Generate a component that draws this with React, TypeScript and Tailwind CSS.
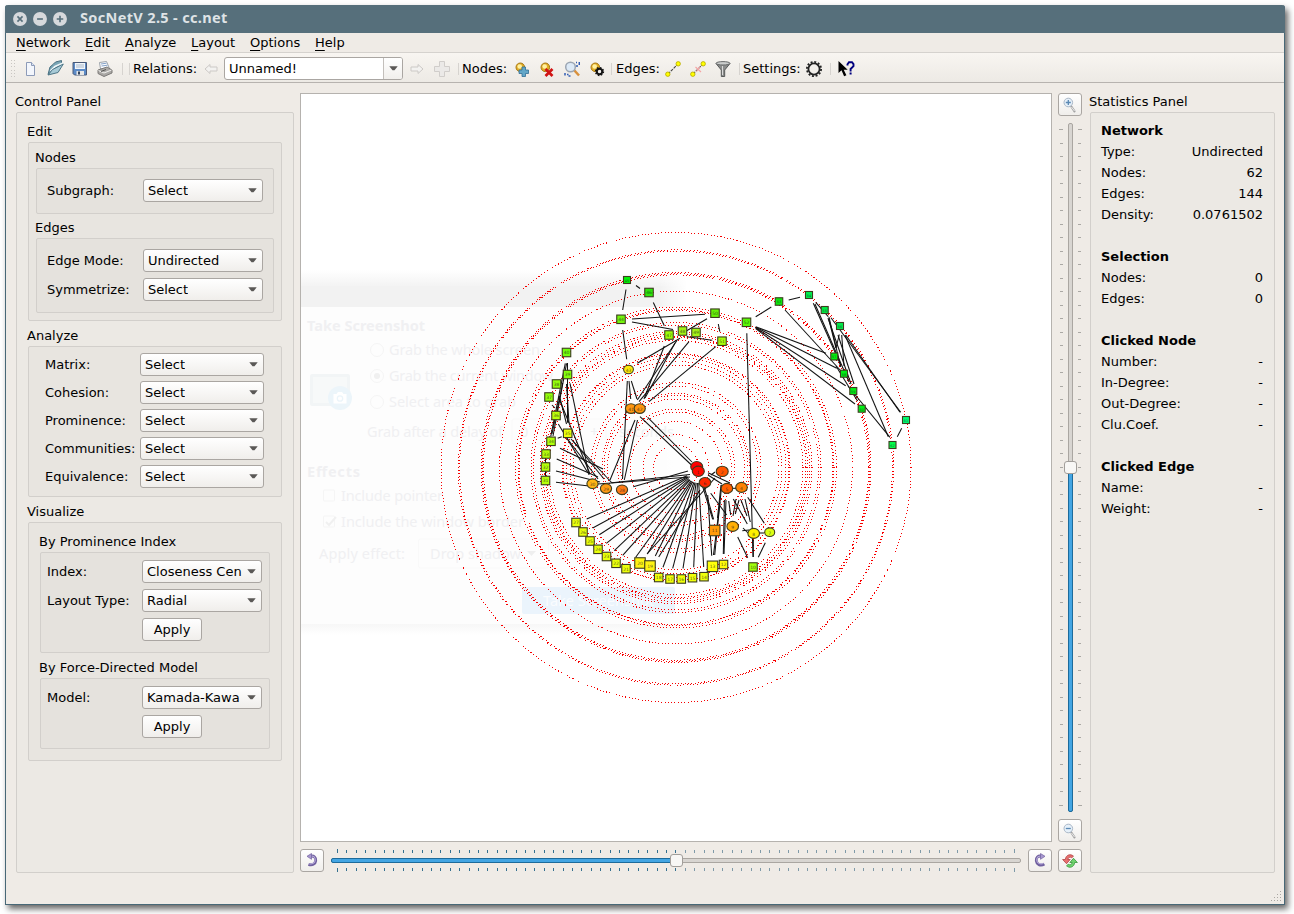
import React from "react";

function Caret() {
  return (
    <svg className="h-[5px] w-[9px] shrink-0" viewBox="0 0 9 5">
      <path d="M0.3 0.3h8.4L5.5 4.3h-2z" fill="#5a5856" />
    </svg>
  );
}

function Select({ value, width }: { value: string; width: string }) {
  return (
    <div
      className={`${width} flex h-[23px] shrink-0 items-center justify-between rounded-[3px] border border-[#aaa6a2] bg-linear-to-b from-white to-[#f0eeeb] pr-[5px] pl-[4px]`}
    >
      <span className="overflow-hidden whitespace-nowrap">{value}</span>
      <Caret />
    </div>
  );
}

function ApplyButton() {
  return (
    <button className="flex h-[23px] w-[60px] items-center justify-center rounded-[3px] border border-[#aaa6a2] bg-linear-to-b from-white to-[#f0eeeb]">
      Apply
    </button>
  );
}

function Group({ title, box, children }: { title: string; box: string; children?: React.ReactNode }) {
  return (
    <section>
      <h2 className="-ml-px h-[17px] pt-px leading-4 whitespace-nowrap">{title}</h2>
      <div className={`mt-[2px] rounded-[2px] border border-[#d2cfcb] ${box}`}>{children}</div>
    </section>
  );
}

function Field({ label, left, children }: { label: string; left: string; children: React.ReactNode }) {
  return (
    <div className="flex h-[23px] items-center">
      <span className={`${left} shrink-0 whitespace-nowrap`}>{label}</span>
      {children}
    </div>
  );
}

function ControlPanel() {
  return (
    <Group title="Control Panel" box="h-[761px] w-[278px] bg-[#ece9e4] pl-[11px] pt-[10px]">
      <Group title="Edit" box="h-[179px] w-[254px] bg-[#e8e5e0] pl-[7px] pt-[6px]">
        <Group title="Nodes" box="h-[46px] w-[238px] bg-[#e5e2dd] pl-[10px] pt-[10px]">
          <Field label="Subgraph:" left="w-[96px]">
            <Select value="Select" width="w-[120px]" />
          </Field>
        </Group>
        <div className="h-[5px]" />
        <Group title="Edges" box="flex h-[75px] w-[238px] flex-col gap-[6px] bg-[#e5e2dd] pl-[10px] pt-[10px]">
          <Field label="Edge Mode:" left="w-[96px]">
            <Select value="Undirected" width="w-[120px]" />
          </Field>
          <Field label="Symmetrize:" left="w-[96px]">
            <Select value="Select" width="w-[120px]" />
          </Field>
        </Group>
      </Group>
      <div className="h-[6px]" />
      <Group title="Analyze" box="flex h-[151px] w-[254px] flex-col gap-[5px] bg-[#e8e5e0] pl-[16px] pt-[6px]">
        {["Matrix:", "Cohesion:", "Prominence:", "Communities:", "Equivalence:"].map((l) => (
          <Field key={l} label={l} left="w-[95px]">
            <Select value="Select" width="w-[124px]" />
          </Field>
        ))}
      </Group>
      <div className="h-[6px]" />
      <Group title="Visualize" box="h-[239px] w-[254px] bg-[#e8e5e0] pl-[11px] pt-[10px]">
        <Group title="By Prominence Index" box="flex h-[101px] w-[230px] flex-col gap-[6px] bg-[#e5e2dd] pl-[6px] pt-[7px]">
          <Field label="Index:" left="w-[95px]">
            <Select value="Closeness Cen" width="w-[120px]" />
          </Field>
          <Field label="Layout Type:" left="w-[95px]">
            <Select value="Radial" width="w-[120px]" />
          </Field>
          <div className="pl-[95px]">
            <ApplyButton />
          </div>
        </Group>
        <div className="h-[6px]" />
        <Group title="By Force-Directed Model" box="flex h-[71px] w-[230px] flex-col gap-[6px] bg-[#e5e2dd] pl-[6px] pt-[7px]">
          <Field label="Model:" left="w-[95px]">
            <Select value="Kamada-Kawa" width="w-[120px]" />
          </Field>
          <div className="pl-[95px]">
            <ApplyButton />
          </div>
        </Group>
      </Group>
    </Group>
  );
}

type Stat = [string, string];
const STATS: { title: string; rows: Stat[] }[] = [
  { title: "Network", rows: [["Type:", "Undirected"], ["Nodes:", "62"], ["Edges:", "144"], ["Density:", "0.0761502"]] },
  { title: "Selection", rows: [["Nodes:", "0"], ["Edges:", "0"]] },
  { title: "Clicked Node", rows: [["Number:", "-"], ["In-Degree:", "-"], ["Out-Degree:", "-"], ["Clu.Coef.", "-"]] },
  { title: "Clicked Edge", rows: [["Name:", "-"], ["Weight:", "-"]] },
];

function StatisticsPanel() {
  return (
    <Group title="Statistics Panel" box="flex h-[761px] w-[185px] flex-col gap-[21px] bg-[#ece9e4] pt-[7px] pr-[11px] pl-[10px]">
      {STATS.map((s) => (
        <div key={s.title}>
          <div className="h-[21px] leading-[21px] font-bold">{s.title}</div>
          {s.rows.map(([k, v]) => (
            <div key={k} className="flex h-[21px] justify-between leading-[21px]">
              <span>{k}</span>
              <span>{v}</span>
            </div>
          ))}
        </div>
      ))}
    </Group>
  );
}

const CX = 676;
const CY = 467.5;
const RINGS = [
  235, 217.6, 216.4, 195, 193.8, 192.6, 176.5, 160.5, 158, 157, 145, 142.5, 136, 133.8, 131.5, 130, 127, 114, 113, 110,
  106, 102.5, 85, 81.5, 74, 72, 68.5, 58.5, 55.5, 46, 33, 22.5,
];

type Seg = [number, number, number, number];
const EDGES: Seg[] = [
  [636, 285.5, 640, 288.5], [626, 289.5, 622.7, 310], [653.3, 302.5, 664.3, 325.7], [632, 319, 705, 314.3],
  [632, 322, 673, 329.5], [622.7, 330, 626.7, 359.3], [637.3, 363.3, 680, 338.3], [686.7, 330.7, 707, 318.7],
  [686.7, 336.7, 712.3, 340.3], [718.3, 324, 719.8, 331.7], [715.7, 346.7, 649, 401.7], [676.7, 340.7, 637.3, 400],
  [689, 341.7, 639, 401.7], [664.3, 346, 644, 399], [675, 343, 645, 398], [627.3, 381, 622.5, 479],
  [629, 381, 630.7, 399], [631.3, 381, 637, 399], [635, 420, 610, 480], [637.5, 420, 624.3, 480],
  [640, 416.7, 692, 465.5], [647.7, 417.3, 692, 462], [565.3, 363.3, 550.7, 436.7], [566.6, 363.3, 553, 436],
  [567.5, 363, 567.5, 422.7], [562.7, 383, 552, 434], [566.5, 384, 569, 423], [570, 383.3, 589, 475],
  [558.3, 396.7, 590, 474], [559.5, 396, 566.5, 424], [558.3, 424, 588, 473], [566, 437, 598, 479],
  [571, 439, 612, 483], [573, 441, 604, 479], [560, 448.3, 603, 469], [556.7, 459, 598, 477],
  [556, 471, 600, 482], [556, 482.3, 587, 485.7], [612, 482.7, 690, 474.5], [633.3, 486.7, 688, 471],
  [598, 484, 690, 477], [552, 405, 555, 408], [557.7, 438.3, 561.7, 436.7], [545.5, 458, 545.5, 476],
  [715, 478, 647, 554], [700, 490, 658.7, 557], [702.7, 486.7, 712.7, 519.3], [704.4, 487.7, 713.6, 519.3],
  [707.7, 495, 711.7, 555.7], [721.7, 485, 714.7, 555], [720, 502, 713.5, 555], [726, 500, 724, 554],
  [724.4, 500, 723.3, 554], [721, 485, 717.5, 518], [710.7, 493.3, 726.7, 515], [728.7, 501, 730.7, 515],
  [733.3, 499, 747.3, 524], [739, 500, 735.3, 514], [736, 499, 733, 516], [745, 499, 750.3, 522],
  [741, 500, 747, 516], [747.7, 497.3, 764.3, 523.3], [737.7, 537, 747.7, 557.7], [753.3, 540, 753.3, 557],
  [765.3, 542.7, 758.3, 557.3], [746.8, 333.3, 753, 557], [742.3, 530.8, 749, 530], [743, 528, 748, 533],
  [760, 533, 764, 533], [708, 472.7, 730, 483], [708, 475, 722, 484], [715, 472, 711, 475],
  [732, 488.3, 736, 488.3], [621, 567, 615, 564], [755.7, 316.7, 771.3, 307], [788.7, 300, 800, 297.3],
  [785, 310, 841, 371], [755.7, 326.7, 826, 353.3], [755.7, 327.2, 836.7, 368.3], [755.7, 327.8, 845.7, 385.7],
  [755.7, 328.5, 855, 404], [813.3, 303.3, 840.7, 365], [815.7, 302.3, 828.3, 316.7], [815, 304, 849, 382],
  [829, 317, 840.7, 367], [828, 318, 851, 384], [829, 320, 836, 348], [839.3, 334.5, 836, 348],
  [841.7, 335, 844, 366], [838, 335, 854, 384], [845.7, 335, 900, 412.3], [831, 317.7, 900.7, 412.3],
  [845, 335, 888.3, 436.7], [848, 386, 890, 437.3], [836, 366, 857.5, 401], [901.7, 428.3, 897.3, 436.7],
];

const SPOKES: [number, number][] = [
  [586.7, 519], [592.7, 528], [599.3, 534.7], [606.3, 543.3], [614.3, 550.7], [622.7, 555.3], [635.7, 557.3],
  [647.3, 554], [655.3, 556], [663, 567.3], [672.7, 568.3], [683, 568.3], [693.7, 567.3], [703.7, 566.7],
];

type Node = [number, number, number, string, number];
const SQUARES: Node[] = [
  [45, 627, 280, "#00f506", 7], [46, 649, 292.5, "#2de80a", 8.5], [44, 621, 319.3, "#73f50c", 8.5], [47, 669, 335, "#9cff0a", 8.5],
  [48, 682.5, 331, "#a4f516", 8.5], [49, 696, 332.5, "#a4f516", 8.5], [50, 715, 313.2, "#67f507", 8.5], [51, 722, 341.2, "#a8ff0a", 8.5],
  [52, 746.5, 322.3, "#58f804", 8.5], [53, 779, 301.5, "#0de70d", 7.5], [54, 809, 295, "#00f050", 7], [55, 824.7, 310, "#00ec44", 7],
  [56, 840, 326, "#00ee4c", 7], [57, 834.3, 356.5, "#00ee0e", 7], [58, 844, 373.7, "#00ee14", 7], [59, 853.3, 391, "#00f014", 7],
  [60, 861.7, 408.7, "#00f014", 7], [61, 906, 420, "#00ff73", 7], [62, 892.5, 445, "#00ff4b", 7], [40, 566.5, 352.5, "#71ff0c", 8.5],
  [39, 567.5, 374.5, "#86ff0a", 8.5], [38, 556.5, 384, "#94ff0a", 8.5], [37, 549, 397, "#94ff0a", 8.5], [36, 556, 415.5, "#bcff0a", 8.5],
  [35, 567.7, 433.3, "#ecff0a", 8.5], [34, 551, 441.3, "#b0ff0a", 8.5], [33, 546, 454, "#b6ff0a", 8.5], [32, 545.5, 467, "#b6ff0a", 8.5],
  [31, 545.5, 480.5, "#b6ff0a", 8.5], [27, 576, 522.5, "#e8ff0a", 8.5], [26, 583, 532, "#e8ff0a", 8.5], [25, 590, 541, "#e8ff0a", 8.5],
  [24, 598, 549.3, "#e8ff0a", 8.5], [23, 606.5, 556.5, "#e8ff0a", 8.5], [22, 616, 563.3, "#e8ff0a", 8.5], [21, 626, 568.7, "#ecff0a", 8.5],
  [20, 640, 563, "#fff314", 10.5], [19, 650, 566, "#fff314", 10.5], [18, 658.7, 577.5, "#f0ff0a", 8.5], [17, 670, 579, "#f0ff0a", 8.5],
  [16, 681.3, 579, "#f0ff0a", 8.5], [15, 692.5, 577.7, "#f0ff0a", 8.5], [14, 704, 576.7, "#f0ff0a", 8.5], [13, 712.5, 566.3, "#ffff0a", 10.5],
  [12, 723.5, 564.5, "#fffb0a", 8.5], [11, 714.7, 530.5, "#ff9b0a", 10.5], [10, 753, 567, "#a2ff0a", 8.5],
];
const DISCS: Node[] = [
  [43, 628.5, 369.5, "#ffea0a", 4.9], [41, 631, 408.6, "#ff960f", 5.6], [42, 639.7, 408.6, "#ff960f", 5.6], [30, 592.5, 483.7, "#ffb514", 5.6],
  [29, 606, 488.6, "#ff9b14", 5.6], [28, 622, 489.8, "#ff7a14", 5.6], [3, 696.7, 466.7, "#ff0000", 6], [1, 698.3, 471.3, "#ff0a00", 6],
  [6, 705, 482.5, "#ff2800", 5.8], [2, 722.2, 471.4, "#ff5500", 6], [5, 726.9, 488.4, "#ff5f00", 5.8], [4, 741.5, 487.4, "#ff8205", 5.8],
  [9, 732.7, 526.4, "#ffaf05", 5.8], [8, 753.7, 533.4, "#fff000", 5.8], [7, 769.7, 532.2, "#dcff14", 5],
];

/* Translucent remains of the screenshot dialog, still fading out over the canvas */
function GhostDialog() {
  const text = { fontFamily: '"Noto Sans", sans-serif', fill: "#f0f0f2" };
  return (
    <g>
      <defs>
        <linearGradient id="fadeTop" x1="0" y1="0" x2="0" y2="1">
          <stop offset="0" stopColor="#fff" />
          <stop offset="1" stopColor="#f2f2f2" />
        </linearGradient>
        <linearGradient id="fadeBottom" x1="0" y1="0" x2="0" y2="1">
          <stop offset="0" stopColor="#f7f7f7" />
          <stop offset="1" stopColor="#fff" />
        </linearGradient>
        <linearGradient id="fadeRight" x1="0" y1="0" x2="1" y2="0">
          <stop offset="0" stopColor="#fff" stopOpacity="0" />
          <stop offset="1" stopColor="#fff" />
        </linearGradient>
      </defs>
      <rect x="301" y="270" width="385" height="18" fill="url(#fadeTop)" />
      <rect x="301" y="286" width="385" height="21" fill="#f2f2f2" />
      <rect x="301" y="307" width="385" height="317" fill="#fdfdfd" />
      <rect x="301" y="624" width="385" height="11" fill="url(#fadeBottom)" />
      <rect x="660" y="269" width="27" height="367" fill="url(#fadeRight)" />
      <g style={text} fontSize="14.5">
        <text x="307" y="331" fontWeight="700" textLength="118">Take Screenshot</text>
        <text x="389" y="355" textLength="151">Grab the whole screen</text>
        <text x="389" y="381" textLength="164">Grab the current window</text>
        <text x="389" y="407" textLength="127">Select area to grab</text>
        <text x="367" y="437" textLength="136">Grab after a delay of</text>
        <text x="520" y="437">0</text>
        <text x="590" y="437">+</text>
        <text x="619" y="437" textLength="55">seconds</text>
        <text x="307" y="477" fontWeight="700" textLength="53">Effects</text>
        <text x="341" y="501" textLength="102">Include pointer</text>
        <text x="341" y="527" textLength="183">Include the window border</text>
        <text x="319" y="559" textLength="86">Apply effect:</text>
        <text x="430" y="559" textLength="91">Drop shadow</text>
      </g>
      <g fill="none" stroke="#f5f5f5">
        <circle cx="377" cy="350" r="6.5" />
        <circle cx="377" cy="376" r="6.5" />
        <circle cx="377" cy="402" r="6.5" />
        <rect x="323.5" y="490" width="11" height="11" rx="1" />
        <rect x="323.5" y="516" width="11" height="11" rx="1" />
        <path d="M326 522l3 3 7-8" stroke="#f0f0f0" strokeWidth="2" />
        <rect x="512" y="419" width="94" height="25" rx="2" stroke="#f9f9f9" />
        <rect x="418.5" y="539" width="130" height="29" rx="2" stroke="#f9f9f9" />
      </g>
      <circle cx="377" cy="376" r="3" fill="#f0f0f0" />
      <path d="M527 551h9l-4.500 5z" fill="#efefef" />
      <rect x="310" y="374" width="40" height="32" rx="2" fill="#f2f5f6" />
      <rect x="313" y="377" width="34" height="26" fill="#f7f9f9" />
      <circle cx="340" cy="398" r="12" fill="#ecf5fa" />
      <path d="M333.500 394h3l1.500-2h4l1.500 2h3v9.500h-13z" fill="#fff" />
      <circle cx="340" cy="398.500" r="2.700" fill="none" stroke="#ecf5fa" strokeWidth="1.300" />
      <rect x="522" y="587" width="153" height="27" rx="2" fill="#ebf4fc" />
      <text x="543" y="606" style={{ fontFamily: '"Noto Sans", sans-serif' }} fontSize="14.500" fill="#fafcfe" textLength="111">
        Take Screenshot
      </text>
    </g>
  );
}

function NetworkCanvas() {
  return (
    <div className="h-[749px] w-[752px] border border-[#b5b2ae] bg-white">
      <svg className="block h-[747px] w-[750px]" viewBox="301 94 750 747">
        <GhostDialog />
        <g fill="none" stroke="#f80000" strokeWidth="1" strokeDasharray="1 2.300" shapeRendering="crispEdges">
          {RINGS.map((r) => (
            <circle key={r} cx={CX} cy={CY} r={r} />
          ))}
        </g>
        <g stroke="#111" strokeWidth="1.050">
          {EDGES.map(([a, b, c, d], i) => (
            <line key={i} x1={a} y1={b} x2={c} y2={d} />
          ))}
          {SPOKES.map(([x, y], i) => {
            const dx = x - 698;
            const dy = y - 471;
            const k = 12 / Math.hypot(dx, dy);
            return <line key={i} x1={698 + dx * k} y1={471 + dy * k} x2={x} y2={y} />;
          })}
        </g>
        <g stroke="#3c3c1e" strokeWidth="1.100" fontFamily="DejaVu Sans" fontSize="4.500" textAnchor="middle">
          {SQUARES.map(([n, x, y, fill, s]) => (
            <g key={n}>
              <rect x={x - s / 2} y={y - s / 2} width={s} height={s} fill={fill} />
              <text x={x} y={y + 1.8} stroke="none" fill="#222" fillOpacity="0.75" fontSize={s < 8 ? 3.5 : 4.5}>{n}</text>
            </g>
          ))}
          {DISCS.map(([n, x, y, fill, r]) => (
            <g key={n}>
              <ellipse cx={x} cy={y} rx={r} ry={r * 0.86} fill={fill} />
              <text x={x} y={y + 2.3} stroke="none" fill="#222" fillOpacity="0.75">{n}</text>
            </g>
          ))}
        </g>
      </svg>
    </div>
  );
}

function Separator() {
  return <div className="h-[12px] w-px shrink-0 bg-[#d6d3cf]" />;
}

function NodeIcon({ children }: { children: React.ReactNode }) {
  return (
    <svg className="size-4" viewBox="0 0 16 16">
      <circle cx="6.300" cy="6.300" r="4.300" fill="#e2ad25" stroke="#a87815" />
      <circle cx="5.700" cy="5.500" r="2.300" fill="#fff1a2" />
      {children}
    </svg>
  );
}

function EdgeIcon({ cut }: { cut?: boolean }) {
  return (
    <svg className="size-4" viewBox="0 0 16 16">
      <path d="M3 13L13 3" stroke="#444" strokeWidth="1.100" strokeDasharray="3 1" />
      {cut && <path d="M5.500 6l5.500 5M10 5.500l-3.500 5" stroke="#f5a5a5" strokeWidth="1.200" />}
      <circle cx="2.800" cy="13.200" r="2.200" fill="#ffff00" stroke="#b5a800" strokeWidth=".8" />
      <circle cx="13.200" cy="2.800" r="2.200" fill="#ffff00" stroke="#b5a800" strokeWidth=".8" />
    </svg>
  );
}

function Toolbar() {
  return (
    <div className="flex h-[30px] shrink-0 items-center border-b border-[#b7b3af] bg-linear-to-b from-[#f8f5f1] to-[#edeae5] pt-[2px]">
      <div className="ml-[5px] flex h-[17px] w-[6px] flex-col justify-between">
        {[0, 1, 2, 3, 4, 5].map((i) => (
          <div key={i} className="flex gap-[2px]">
            <i className="h-px w-[1px] bg-[#c9c6c2]" />
            <i className="h-px w-[1px] bg-[#c9c6c2]" />
          </div>
        ))}
      </div>
      <svg className="ml-[5px] size-4" viewBox="0 0 16 16">
        <path d="M4.500 1.500h5l3 3v10h-8z" fill="#f3f6fc" stroke="#8d9bb8" />
        <path d="M9.500 1.500v3h3" fill="#dbe4f3" stroke="#8d9bb8" />
      </svg>
      <svg className="ml-[9px] size-[17px]" viewBox="0 0 17 17">
        <path d="M1 14.500L3 7l3.500-3 2-2 6-1.500v3z" fill="#7aa6b6" stroke="#4a7182" />
        <path d="M3.500 11L8 6.500l8-3.500" stroke="#eef5f8" strokeWidth="1.800" fill="none" />
        <path d="M1 15L5.500 9.500 16.300 4 11 12.500z" fill="#a7cad6" stroke="#4d7586" />
      </svg>
      <svg className="ml-[8px] size-4" viewBox="0 0 16 16">
        <path d="M1 1.500h13.500v12.500H2.500L1 12.500z" fill="#5c8bc7" stroke="#4a5a78" />
        <rect x="3" y="2" width="10" height="6" fill="#f2f6fa" />
        <path d="M4 4h8M4 6h8" stroke="#a9b8cb" />
        <rect x="4.500" y="10" width="7.500" height="4" fill="#e5e7e8" />
        <rect x="6" y="10.500" width="2" height="3" fill="#33425a" />
      </svg>
      <svg className="ml-[9px] size-4" viewBox="0 0 16 16">
        <path d="M3.500 8L2.500 1.500l7-1 3 7z" fill="#fafcff" stroke="#9ca3aa" />
        <path d="M4 3l5.500-.8M4.500 5l6-.8" stroke="#86a2c7" />
        <path d="M1 9l9-3 5 3v3l-8 3.500-6-3z" fill="#aaa8a5" stroke="#7b7977" />
        <path d="M1.500 9.500L7 12l7.500-3" stroke="#f1f1ef" fill="none" />
        <path d="M4 10.500l5-2" stroke="#555" />
      </svg>
      <div className="ml-[9px] flex gap-[6px]">
        <Separator />
        <Separator />
      </div>
      <span className="ml-[3px] w-[64px] whitespace-nowrap">Relations:</span>
      <svg className="ml-[7px] size-[14px]" viewBox="0 0 14 14">
        <path d="M1 7l5-4.500v2.500h7v4H6v2.500z" fill="#f3f2f0" stroke="#ccc9c6" />
      </svg>
      <div className="ml-[6px] flex h-[23px] w-[179px] items-stretch rounded-[3px] border border-[#aaa6a2] bg-white">
        <span className="flex flex-1 items-center pl-[4px]">Unnamed!</span>
        <span className="flex w-[19px] items-center justify-center rounded-r-[2px] border-l border-[#c3bfbb] bg-linear-to-b from-white to-[#f1efec]">
          <Caret />
        </span>
      </div>
      <svg className="ml-[7px] size-[14px]" viewBox="0 0 14 14">
        <path d="M13 7L8 2.500v2.500H1v4h7v2.500z" fill="#f3f2f0" stroke="#ccc9c6" />
      </svg>
      <svg className="ml-[10px] size-4" viewBox="0 0 16 16">
        <path d="M5.500.5h5v5h5v5h-5v5h-5v-5h-5v-5h5z" fill="#ebe9e7" stroke="#d0cdca" />
      </svg>
      <div className="ml-[8px]">
        <Separator />
      </div>
      <span className="ml-[3px] w-[45px] whitespace-nowrap">Nodes:</span>
      <div className="ml-[7px] flex gap-[9px]">
        <NodeIcon>
          <path d="M8 6h3.500v3h3v3.500h-3v3H8v-3H5V9h3z" fill="#63a7c8" stroke="#316f95" strokeWidth=".8" />
        </NodeIcon>
        <NodeIcon>
          <path d="M6.500 8l7 7M13.500 8l-7 7" stroke="#d01414" strokeWidth="2.700" />
        </NodeIcon>
        <svg className="size-4" viewBox="0 0 16 16">
          <path d="M10 9l5 5.500" stroke="#d9913c" strokeWidth="2.500" />
          <circle cx="6.500" cy="6" r="4.800" fill="#dce9f6" stroke="#9ba5b2" strokeWidth="1.500" />
          <path d="M3 13.500h1.500M1 12v2.500M4.500 15h2M12 1.500h1M13 4v2M15.300 1v3" stroke="#315cb2" strokeWidth="1.500" />
        </svg>
        <NodeIcon>
          <circle cx="10.500" cy="10.500" r="2.700" fill="none" stroke="#151515" strokeWidth="2" />
          <circle cx="10.500" cy="10.500" r="3.900" fill="none" stroke="#151515" strokeWidth="1.500" strokeDasharray="1.530 1.530" />
          <circle cx="10.500" cy="10.500" r="1.400" fill="#eee" />
        </NodeIcon>
      </div>
      <div className="ml-[6px]">
        <Separator />
      </div>
      <span className="ml-[4px] w-[43px] whitespace-nowrap">Edges:</span>
      <div className="ml-[6px] flex gap-[9px]">
        <EdgeIcon />
        <EdgeIcon cut />
        <svg className="size-4" viewBox="0 0 16 16">
          <path d="M1 2.500L6.300 9v6.500h3.400V9L15 2.500z" fill="#8b8c8b" stroke="#585a5a" />
          <ellipse cx="8" cy="2.300" rx="7" ry="1.700" fill="#cbcdcc" stroke="#696b6b" />
          <path d="M7.500 5v9" stroke="#dadada" />
        </svg>
      </div>
      <div className="ml-[8px]">
        <Separator />
      </div>
      <span className="ml-[3px] w-[57px] whitespace-nowrap">Settings:</span>
      <svg className="ml-[5px] size-[18px]" viewBox="0 0 18 18">
        <circle cx="9" cy="9" r="5.600" fill="none" stroke="#222" strokeWidth="1.800" />
        <circle cx="9" cy="9" r="7.100" fill="none" stroke="#222" strokeWidth="1.800" strokeDasharray="2 1.720" />
      </svg>
      <div className="ml-[7px]">
        <Separator />
      </div>
      <svg className="ml-[6px] h-[18px] w-[18px]" viewBox="0 0 18 18">
        <path d="M1.500 1v12l3-2.700 2.600 6 2.300-1-2.700-5.600h4z" fill="#000" />
        <path d="M10.500 5.500V4.300L12 2.200h3l1.500 1.900v2L13.600 9v2.500" fill="none" stroke="#00007f" strokeWidth="1.900" />
        <rect x="12.600" y="12.500" width="2" height="2" fill="#00007f" />
      </svg>
    </div>
  );
}

const ZOOM_TICKS = Array.from({ length: 51 }, (_, i) => i);
const ROTATION_TICKS = Array.from({ length: 73 }, (_, i) => i);

function VerticalSlider() {
  return (
    <svg className="h-[689px] w-[24px]" viewBox="0 0 24 689">
      {ZOOM_TICKS.map((i) => {
        const y = Math.round(6 + i * 13.52) + 0.5;
        const inset = i === 0 || i === 50 ? 0 : 1;
        return <path key={i} d={`M${1 + inset} ${y}H5M20 ${y}H${24 - inset}`} stroke="#aaa8a4" />;
      })}
      <rect x="10.500" y=".5" width="4" height="688" rx="1.500" fill="#d8d5d1" stroke="#aaa6a1" />
      <rect x="10.500" y="345" width="4" height="343.500" rx="1.500" fill="#43a5e3" stroke="#1d6b9b" />
      <rect x="6.500" y="338.500" width="12" height="12" rx="2.500" fill="#f8f7f5" stroke="#a29e9a" />
    </svg>
  );
}

function HorizontalSlider() {
  return (
    <svg className="h-[24px] w-[690px]" viewBox="0 0 690 24">
      {ROTATION_TICKS.map((i) => {
        const x = Math.round(6 + i * 9.4) + 0.5;
        const inset = i === 0 || i === 72 ? 0 : 1;
        return (
          <path key={i} d={`M${x} ${inset}V4M${x} 19V${23 - inset}`} stroke={i <= 36 ? "#34708f" : "#7f9aa8"} />
        );
      })}
      <rect x=".5" y="9.500" width="689" height="4" rx="1.500" fill="#d8d5d1" stroke="#aaa6a1" />
      <rect x=".5" y="9.500" width="344" height="4" rx="1.500" fill="#43a5e3" stroke="#1d6b9b" />
      <rect x="339.500" y="5.500" width="12" height="12" rx="2.500" fill="#f8f7f5" stroke="#a29e9a" />
    </svg>
  );
}

function ToolButton({ children }: { children: React.ReactNode }) {
  return (
    <button className="flex h-[23px] w-[24px] shrink-0 items-center justify-center rounded-[3px] border border-[#aaa6a2] bg-linear-to-b from-white to-[#f0eeeb]">
      <svg className="size-4" viewBox="0 0 16 16">
        {children}
      </svg>
    </button>
  );
}

function Magnifier({ plus }: { plus?: boolean }) {
  return (
    <>
      <path d="M9 9l3.500 5.300" stroke="#a4a4a4" strokeWidth="2.200" strokeLinecap="round" />
      <path d="M9.500 10l3 4" stroke="#f2f2f2" strokeWidth=".9" />
      <circle cx="6.300" cy="5.500" r="4.300" fill="#e6f0f9" stroke="#a9b7c7" />
      <path d={plus ? "M3.800 5.500h5M6.300 3v5" : "M3.800 5.500h5"} stroke="#5b89b4" strokeWidth="1.300" />
    </>
  );
}

function MenuItem({ label }: { label: string }) {
  return (
    <span>
      <span className="underline decoration-1 underline-offset-[3px]">{label[0]}</span>
      {label.slice(1)}
    </span>
  );
}

function Menus() {
  return (
    <div className="flex h-[20px] shrink-0 items-center border-b border-[#d5d2ce] pl-[10px] leading-[18px]">
      <div className="w-[69px]"><MenuItem label="Network" /></div>
      <div className="w-[40px]"><MenuItem label="Edit" /></div>
      <div className="w-[66px]"><MenuItem label="Analyze" /></div>
      <div className="w-[59px]"><MenuItem label="Layout" /></div>
      <div className="w-[65px]"><MenuItem label="Options" /></div>
      <MenuItem label="Help" />
    </div>
  );
}

function TitleBar() {
  return (
    <div className="-mx-px flex h-[28px] shrink-0 items-center rounded-t-[3px] bg-[#566f7b] pl-[9px]">
      <div className="flex gap-[8px]">
        {["M3.800 3.800l4.400 4.400M8.200 3.800L3.800 8.200", "M3.500 6h5", "M3.200 6h5.600M6 3.200v5.600"].map((d) => (
          <svg key={d} className="h-[12px] w-[12px] scale-[1.16]" viewBox="0 0 12 12">
            <circle cx="6" cy="6" r="6" fill="#d6d9dc" />
            <path d={d} stroke="#566f7b" strokeWidth="1.400" />
          </svg>
        ))}
      </div>
      <h1 className="ml-[14px] pb-[2px] font-['Noto_Sans',sans-serif] text-[14.5px] font-bold tracking-[0.35px] whitespace-nowrap text-[#dfe3e6]">
        SocNetV 2.5 - cc.net
      </h1>
    </div>
  );
}

export default function App() {
  return (
    <div className="h-[914px] w-[1294px] overflow-hidden bg-white p-[5px] font-['DejaVu_Sans',sans-serif] text-[13px] text-black">
      <div className="flex h-[900px] w-[1280px] flex-col rounded-t-[3px] border-x border-b border-[#486877] bg-[#efebe6] shadow-[3px_4px_6px_rgba(0,0,0,0.6)]">
        <TitleBar />
        <Menus />
        <Toolbar />
        <main className="flex h-[802px] shrink-0 pt-[10px] pl-[10px]">
          <ControlPanel />
          <div className="ml-[6px] flex w-[782px] flex-col gap-[7px]">
            <div className="flex gap-[6px]">
              <NetworkCanvas />
              <div className="flex flex-col gap-[7px]">
                <ToolButton><Magnifier plus /></ToolButton>
                <VerticalSlider />
                <ToolButton><Magnifier /></ToolButton>
              </div>
            </div>
            <div className="flex h-[24px] gap-[7px]">
              <ToolButton>
                <path d="M6.500 3.200c3.500-.7 5.600 1.400 5.200 4.500-.4 3.300-3.600 5-7.200 3.600" fill="none" stroke="#70609f" strokeWidth="2.900" />
                <path d="M6.500 3c3-.4 5 1.500 4.700 4.500-.3 2.500-3 4-6 3.300" fill="none" stroke="#b9addb" strokeWidth="1.100" />
                <path d="M7.500.5L3 3.300l4.500 3z" fill="#a797cf" stroke="#70609f" strokeWidth=".7" />
              </ToolButton>
              <HorizontalSlider />
              <ToolButton>
                <path d="M9.500 3.200C6 2.500 3.900 4.600 4.300 7.700c.4 3.500 4 5.800 8 3.300" fill="none" stroke="#70609f" strokeWidth="2.900" />
                <path d="M9.500 3C6.500 2.600 4.500 4.500 4.800 7.500c.3 2.500 3 4.200 6.700 2.900" fill="none" stroke="#b9addb" strokeWidth="1.100" />
                <path d="M8.500.5l4.500 2.800-4.500 3z" fill="#a797cf" stroke="#70609f" strokeWidth=".7" />
              </ToolButton>
              <div className="-ml-px">
                <ToolButton>
                  <path d="M11.500 3.200C8.500.3 3.800 1.800 3.300 6.500H.6l3.900 4.200 3.700-4.200H5.800c.3-2 2.200-2.900 4-1.800z" fill="#e77070" stroke="#a93535" strokeWidth=".7" />
                  <path d="M4.500 12.800c3 2.900 7.700 1.400 8.200-3.300h2.700l-3.900-4.200-3.700 4.200h2.400c-.3 2-2.200 2.900-4 1.800z" fill="#6ed36e" stroke="#298a2c" strokeWidth=".7" />
                </ToolButton>
              </div>
            </div>
          </div>
          <div className="ml-[8px]">
            <StatisticsPanel />
          </div>
        </main>
        <footer className="flex flex-1 items-end justify-end pr-[2px] pb-[2px]">
          <svg className="h-[11px] w-[11px]" viewBox="0 0 11 11">
            {[0, 1, 2, 3].map((r) =>
              [0, 1, 2, 3].filter((c) => c + r >= 3).map((c) => (
                <rect key={`${r}-${c}`} x={c * 3} y={r * 3} width="1" height="1" fill="#aaa7a3" />
              )),
            )}
          </svg>
        </footer>
      </div>
    </div>
  );
}
